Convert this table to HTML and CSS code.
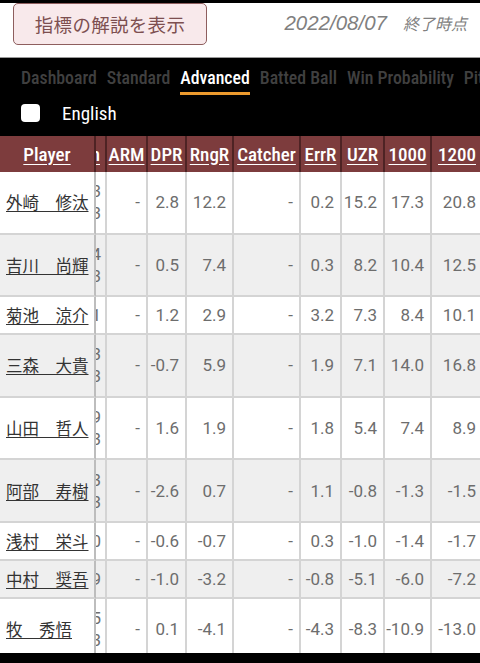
FILE: index.html
```html
<!DOCTYPE html>
<html lang="ja">
<head>
<meta charset="utf-8">
<link rel="stylesheet" href="styles.css">
</head>
<body>
<div class="page">
  <header class="top">
    <button class="explain">指標の解説を表示</button>
    <span class="date"><span class="date-num">2022/08/07</span><span class="date-jp">　終了時点</span></span>
  </header>
  <nav class="tabs">
    <a class="tab">Dashboard</a>
    <a class="tab">Standard</a>
    <a class="tab active">Advanced</a>
    <a class="tab">Batted Ball</a>
    <a class="tab">Win Probability</a>
    <a class="tab">Pitching</a>
  </nav>
  <label class="lang"><span class="box"></span><span>English</span></label>
  <div class="table-wrap">
    <table class="stats">
      <colgroup>
        <col class="c-player"><col class="c-cut"><col class="c-41"><col class="c-39"><col class="c-47"><col class="c-67"><col class="c-41"><col class="c-43"><col class="c-47"><col class="c-52">
      </colgroup>
      <thead>
        <tr>
          <th class="player"><a>Player</a></th>
          <th class="cut"><a>Inn</a></th>
          <th><a>ARM</a></th>
          <th><a>DPR</a></th>
          <th><a>RngR</a></th>
          <th><a>Catcher</a></th>
          <th><a>ErrR</a></th>
          <th><a>UZR</a></th>
          <th><a>1000</a></th>
          <th><a>1200</a></th>
        </tr>
      </thead>
      <tbody>
        <tr class="tall">
          <td class="player"><a>外崎　修汰</a></td>
          <td class="cut">893<br>3</td>
          <td>-</td><td>2.8</td><td>12.2</td><td>-</td><td>0.2</td><td>15.2</td><td>17.3</td><td>20.8</td>
        </tr>
        <tr class="tall">
          <td class="player"><a>吉川　尚輝</a></td>
          <td class="cut">884<br>3</td>
          <td>-</td><td>0.5</td><td>7.4</td><td>-</td><td>0.3</td><td>8.2</td><td>10.4</td><td>12.5</td>
        </tr>
        <tr>
          <td class="player"><a>菊池　涼介</a></td>
          <td class="cut">871</td>
          <td>-</td><td>1.2</td><td>2.9</td><td>-</td><td>3.2</td><td>7.3</td><td>8.4</td><td>10.1</td>
        </tr>
        <tr class="tall">
          <td class="player"><a>三森　大貴</a></td>
          <td class="cut">663<br>3</td>
          <td>-</td><td>-0.7</td><td>5.9</td><td>-</td><td>1.9</td><td>7.1</td><td>14.0</td><td>16.8</td>
        </tr>
        <tr class="tall">
          <td class="player"><a>山田　哲人</a></td>
          <td class="cut">829<br>3</td>
          <td>-</td><td>1.6</td><td>1.9</td><td>-</td><td>1.8</td><td>5.4</td><td>7.4</td><td>8.9</td>
        </tr>
        <tr class="tall">
          <td class="player"><a>阿部　寿樹</a></td>
          <td class="cut">703<br>3</td>
          <td>-</td><td>-2.6</td><td>0.7</td><td>-</td><td>1.1</td><td>-0.8</td><td>-1.3</td><td>-1.5</td>
        </tr>
        <tr>
          <td class="player"><a>浅村　栄斗</a></td>
          <td class="cut">890</td>
          <td>-</td><td>-0.6</td><td>-0.7</td><td>-</td><td>0.3</td><td>-1.0</td><td>-1.4</td><td>-1.7</td>
        </tr>
        <tr>
          <td class="player"><a>中村　奨吾</a></td>
          <td class="cut">899</td>
          <td>-</td><td>-1.0</td><td>-3.2</td><td>-</td><td>-0.8</td><td>-5.1</td><td>-6.0</td><td>-7.2</td>
        </tr>
        <tr class="tall">
          <td class="player"><a>牧　秀悟</a></td>
          <td class="cut">875<br>3</td>
          <td>-</td><td>0.1</td><td>-4.1</td><td>-</td><td>-4.3</td><td>-8.3</td><td>-10.9</td><td>-13.0</td>
        </tr>
      </tbody>
    </table>
  </div>
</div>
</body>
</html>
```

FILE: styles.css
```css
html, body {
  margin: 0;
  padding: 0;
  background: #000;
}
body {
  width: 480px;
  height: 663px;
  overflow: hidden;
  font-family: Roboto, "Noto Sans CJK JP", sans-serif;
}
.page {
  padding-top: 3px;
}
.top {
  background: #fff;
  height: 55px;
  border-bottom: 1px solid #9a9a9a;
  display: flex;
  align-items: flex-start;
  justify-content: space-between;
  padding: 0 13px 0 13px;
  box-sizing: border-box;
}
.explain {
  width: 194px;
  height: 42px;
  margin: 0;
  background: #f8e9eb;
  border: 1.5px solid #8e5e5e;
  border-radius: 5px;
  color: #7d4f50;
  font-family: "Noto Sans CJK JP", sans-serif;
  font-size: 18.5px;
  letter-spacing: 0.3px;
  padding: 0;
}
.date {
  margin-top: 8px;
  color: #808080;
  font-style: italic;
  white-space: nowrap;
}
.date-num {
  font-family: "Liberation Sans", Arial, sans-serif;
  font-size: 20.5px;
}
.date-jp {
  font-family: "Noto Sans CJK JP", sans-serif;
  font-size: 16px;
}
.tabs {
  display: flex;
  gap: 10px;
  padding-left: 21px;
  height: 40px;
  white-space: nowrap;
  overflow: hidden;
  font-family: "Roboto Condensed", "Liberation Sans Narrow", "DejaVu Sans Condensed", sans-serif;
  font-size: 17.8px;
  font-weight: 500;
}
.tab {
  color: #404040;
  padding-top: 9px;
  border-bottom: 3px solid transparent;
  height: 25px;
  flex: none;
}
.tab.active {
  color: #fff;
  border-bottom-color: #ec9a2e;
}
.lang {
  display: flex;
  align-items: center;
  height: 30px;
  padding-left: 21px;
  color: #fff;
  font-family: "Roboto Condensed", "Liberation Sans Narrow", "DejaVu Sans Condensed", sans-serif;
  font-size: 19px;
}
.box {
  width: 19px;
  height: 18px;
  background: #fff;
  border-radius: 4px;
  margin-right: 22px;
}
.table-wrap {
  margin-top: 8px;
  height: 517px;
  overflow: hidden;
}
.stats {
  border-collapse: separate;
  border-spacing: 0;
  table-layout: fixed;
  width: 484px;
}
.c-player { width: 96px; }
.c-cut { width: 11px; }
.c-41 { width: 41px; }
.c-39 { width: 39px; }
.c-47 { width: 47px; }
.c-67 { width: 67px; }
.c-43 { width: 43px; }
.c-52 { width: 52px; }
.stats th, .stats td {
  box-sizing: border-box;
  overflow: hidden;
  white-space: nowrap;
}
.stats th {
  background: #7d3c3d;
  height: 36px;
  padding: 0;
  border-right: 2px solid #4e2324;
  text-align: center;
  font-family: "Roboto Condensed", "Liberation Sans Narrow", "DejaVu Sans Condensed", sans-serif;
  font-size: 19px;
  font-weight: 500;
}
.stats th a {
  color: #fff;
  text-decoration: underline;
  text-underline-offset: 3px;
}
.stats td {
  border-right: 2px solid #d4d4d4;
  border-bottom: 2px solid #d4d4d4;
  padding: 0 6px 0 0;
  text-align: right;
  color: #6d6d6d;
  font-size: 17px;
}
.stats tbody tr { height: 38px; }
.stats tbody tr.tall { height: 62.6px; }
.stats tbody tr:nth-child(even) td { background: #efefef; }
.stats tbody tr:nth-child(odd) td { background: #fff; }
.stats td.player {
  text-align: left;
  padding-left: 6px;
  border-right-color: #bdbdbd;
  font-family: "Noto Sans CJK JP", sans-serif;
  font-size: 16.5px;
}
.stats td.player a {
  color: #333;
  text-decoration: underline;
  text-underline-offset: 2px;
}
.stats .cut {
  direction: rtl;
  text-align: right;
  padding-right: 6px;
}
.stats td.cut {
  line-height: 22px;
}
.stats th.cut {
  padding-right: 7px;
}
```
